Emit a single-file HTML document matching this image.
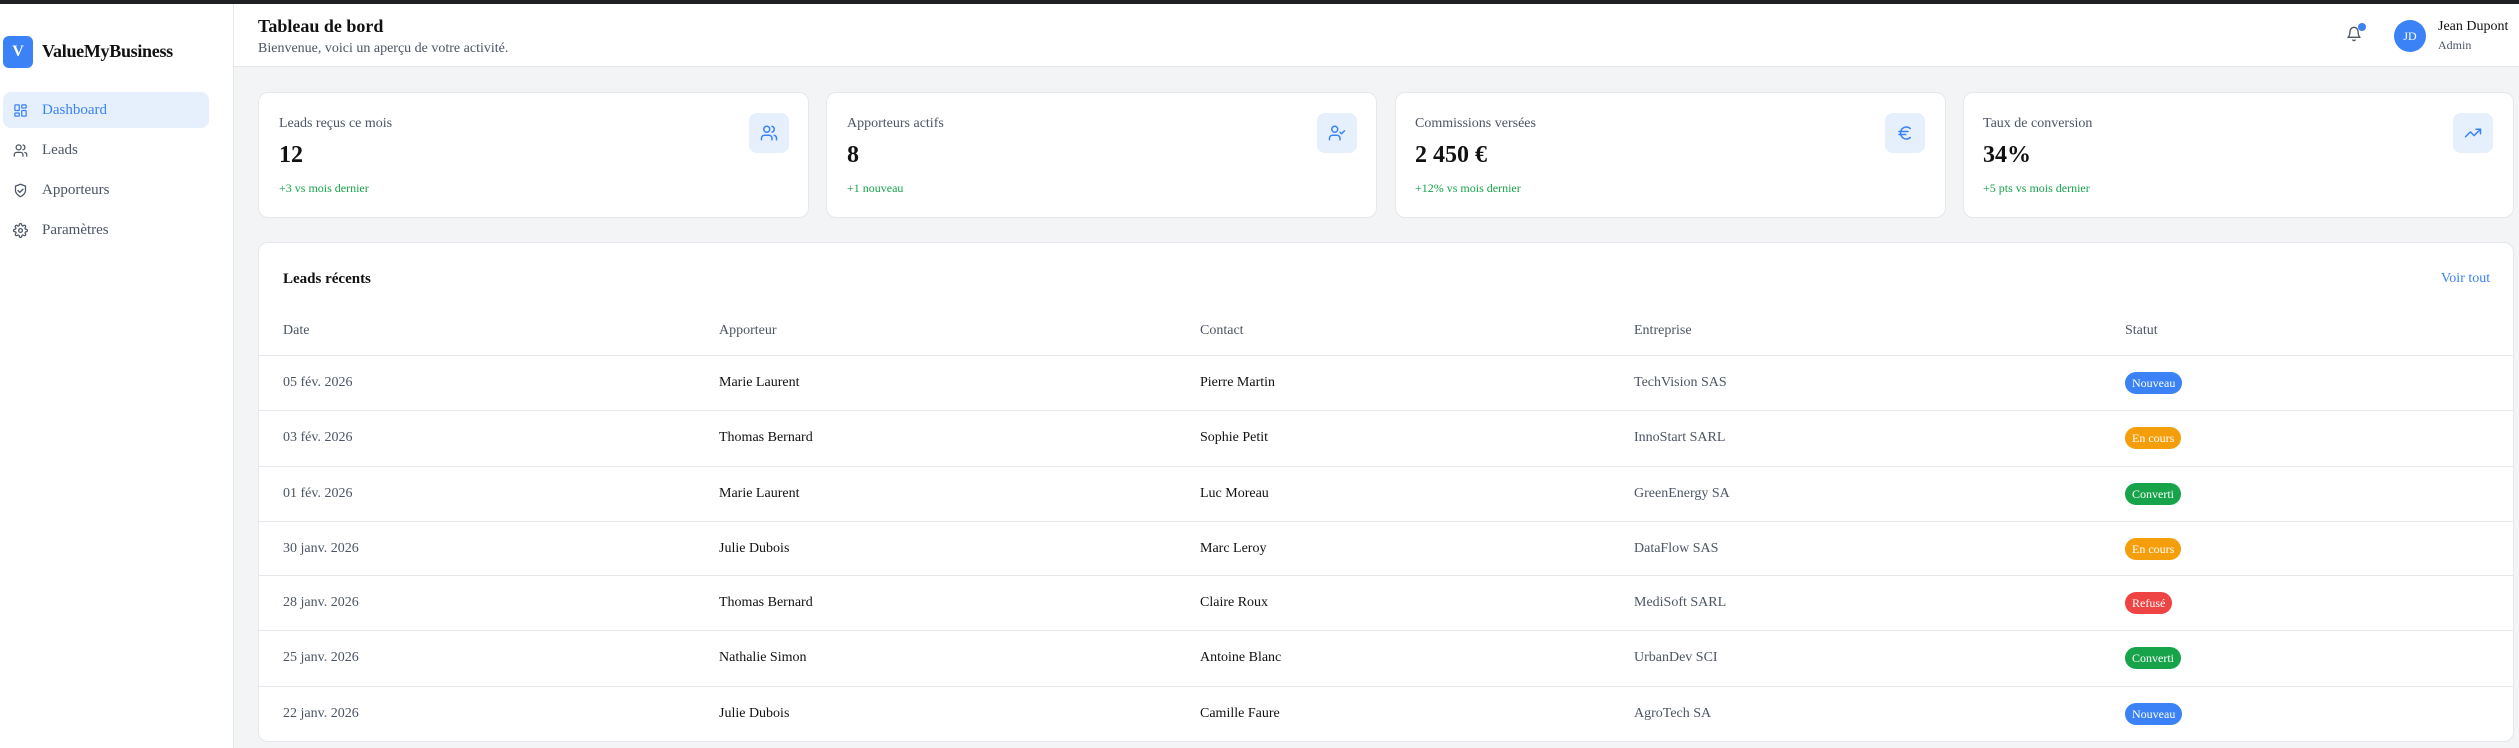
<!DOCTYPE html>
<html><head><meta charset="utf-8"><style>
*{box-sizing:border-box;margin:0;padding:0}
body{width:2519px;height:748px;overflow:hidden;background:#f3f4f6;font-family:"Liberation Serif",serif;position:relative;color:#111}
.abs{position:absolute}
.topbar{left:0;top:0;width:2519px;height:4px;background:#1f2023}
.side{left:0;top:4px;width:234px;height:744px;background:#fff;border-right:1px solid #e5e7eb}
.hdr{left:234px;top:4px;width:2285px;height:63px;background:#fff;border-bottom:1px solid #e5e7eb}
.logo{left:3px;top:36px;width:30px;height:32px;background:#3b82f6;border-radius:6px;color:#fff;font-weight:bold;font-size:16px;display:flex;align-items:center;justify-content:center}
.brand{left:42px;top:41px;font-weight:bold;font-size:18px;letter-spacing:-0.3px}
.nav{left:3px;width:206px;height:36px;border-radius:8px;display:flex;align-items:center;padding-left:10px;font-size:15px;color:#4b5563}
.nav svg{width:15px;height:15px;margin-right:14px;stroke:currentColor;fill:none;stroke-width:2;stroke-linecap:round;stroke-linejoin:round}
.nav.act{background:#e6f0fd;color:#3b82f6}
.card{background:#fff;border:1px solid #e5e7eb;border-radius:10px}
.lbl{font-size:14px;color:#4b5563}
.val{font-size:24px;font-weight:bold}
.grn{font-size:12px;color:#16a34a}
.ib{width:40px;height:40px;background:#e6f0fd;border-radius:8px;display:flex;align-items:center;justify-content:center;color:#3b82f6}
.ib svg{width:18px;height:18px;stroke:currentColor;fill:none;stroke-width:2;stroke-linecap:round;stroke-linejoin:round}
.row{left:259px;width:2254px;border-top:1px solid #e5e7eb;height:55px;font-size:14px}
.row span{position:absolute;top:50%;transform:translateY(-50%);white-space:nowrap}
.g{color:#4b5563}
.b{color:#fff;font-size:12px;border-radius:11px;height:22px;padding:0 7px;line-height:22px}
</style></head><body>
<div class="abs topbar"></div>
<div class="abs side"></div>
<div class="abs hdr"></div>
<div class="abs logo">V</div>
<div class="abs brand">ValueMyBusiness</div>
<div class="abs nav act" style="top:92px"><svg viewBox="0 0 24 24"><rect x="3" y="3" width="7" height="9" rx="1"/><rect x="14" y="3" width="7" height="5" rx="1"/><rect x="14" y="12" width="7" height="9" rx="1"/><rect x="3" y="16" width="7" height="5" rx="1"/></svg>Dashboard</div>
<div class="abs nav" style="top:132px"><svg viewBox="0 0 24 24"><path d="M16 21v-2a4 4 0 0 0-4-4H6a4 4 0 0 0-4 4v2"/><circle cx="9" cy="7" r="4"/><path d="M22 21v-2a4 4 0 0 0-3-3.87"/><path d="M16 3.13a4 4 0 0 1 0 7.75"/></svg>Leads</div>
<div class="abs nav" style="top:172px"><svg viewBox="0 0 24 24"><path d="M12 22s8-4 8-10V5l-8-3-8 3v7c0 6 8 10 8 10z"/><path d="M8 12l3 3 5-5"/></svg>Apporteurs</div>
<div class="abs nav" style="top:212px"><svg viewBox="0 0 24 24"><circle cx="12" cy="12" r="3"/><path d="M19.4 15a1.65 1.65 0 0 0 .33 1.82l.06.06a2 2 0 1 1-2.830 2.83l-.06-.06a1.65 1.65 0 0 0-2.82 1.17V21a2 2 0 1 1-4 0v-.09A1.650 1.65 0 0 0 9 19.4a1.65 1.65 0 0 0-1.82.33l-.06.06a2 2 0 1 1-2.83-2.83l.06-.06A1.65 1.65 0 0 0 3.2 14H3a2 2 0 1 1 0-4h.09A1.65 1.65 0 0 0 4.6 9a1.65 1.65 0 0 0-.33-1.82l-.06-.06a2 2 0 1 1 2.83-2.830l.06.06A1.65 1.65 0 0 0 10 3.09V3a2 2 0 1 1 4 0v.09a1.65 1.65 0 0 0 1 1.51 1.65 1.65 0 0 0 1.82-.33l.06-.06a2 2 0 1 1 2.83 2.83l-.06.06A1.65 1.65 0 0 0 20.91 10H21a2 2 0 1 1 0 4h-.09a1.65 1.65 0 0 0-1.51 1z"/></svg>Paramètres</div>

<div class="abs" style="left:258px;top:16px;font-size:18px;font-weight:bold">Tableau de bord</div>
<div class="abs" style="left:258px;top:41px;font-size:14px;color:#4b5563">Bienvenue, voici un aperçu de votre activité.</div>

<svg class="abs" style="left:2346px;top:26px" width="16" height="16" viewBox="0 0 24 24" fill="none" stroke="#4b5563" stroke-width="2" stroke-linecap="round" stroke-linejoin="round"><path d="M18 8A6 6 0 0 0 6 8c0 7-3 9-3 9h18s-3-2-3-9"/><path d="M13.7 21a2 2 0 0 1-3.4 0"/></svg>
<div class="abs" style="left:2358px;top:23px;width:8px;height:8px;border-radius:50%;background:#3b82f6"></div>
<div class="abs" style="left:2394px;top:20px;width:32px;height:32px;border-radius:50%;background:#3b82f6;color:#fff;font-size:12px;display:flex;align-items:center;justify-content:center">JD</div>
<div class="abs" style="left:2438px;top:19px;font-size:14px">Jean Dupont</div>
<div class="abs" style="left:2438px;top:38px;font-size:12px;color:#4b5563">Admin</div>

<div class="abs card" style="left:258px;top:92px;width:551px;height:126px"></div>
<div class="abs card" style="left:826px;top:92px;width:551px;height:126px"></div>
<div class="abs card" style="left:1395px;top:92px;width:551px;height:126px"></div>
<div class="abs card" style="left:1963px;top:92px;width:551px;height:126px"></div>

<div class="abs lbl" style="left:279px;top:116px">Leads reçus ce mois</div>
<div class="abs val" style="left:279px;top:142px">12</div>
<div class="abs grn" style="left:279px;top:181px">+3 vs mois dernier</div>
<div class="abs ib" style="left:749px;top:113px"><svg viewBox="0 0 24 24"><path d="M16 21v-2a4 4 0 0 0-4-4H6a4 4 0 0 0-4 4v2"/><circle cx="9" cy="7" r="4"/><path d="M22 21v-2a4 4 0 0 0-3-3.87"/><path d="M16 3.13a4 4 0 0 1 0 7.75"/></svg></div>

<div class="abs lbl" style="left:847px;top:116px">Apporteurs actifs</div>
<div class="abs val" style="left:847px;top:142px">8</div>
<div class="abs grn" style="left:847px;top:181px">+1 nouveau</div>
<div class="abs ib" style="left:1317px;top:113px"><svg viewBox="0 0 24 24"><path d="M16 21v-2a4 4 0 0 0-4-4H6a4 4 0 0 0-4 4v2"/><circle cx="9" cy="7" r="4"/><path d="M16 11l2 2 4-4"/></svg></div>

<div class="abs lbl" style="left:1415px;top:116px">Commissions versées</div>
<div class="abs val" style="left:1415px;top:142px">2 450 €</div>
<div class="abs grn" style="left:1415px;top:181px">+12% vs mois dernier</div>
<div class="abs ib" style="left:1885px;top:113px"><svg viewBox="0 0 24 24"><path d="M4 10h12"/><path d="M4 14h9"/><path d="M19 6a7.7 7.7 0 0 0-5.2-2A7.9 7.9 0 0 0 6 12c0 4.4 3.5 8 7.8 8 2 0 3.8-.8 5.2-2"/></svg></div>

<div class="abs lbl" style="left:1983px;top:116px">Taux de conversion</div>
<div class="abs val" style="left:1983px;top:142px">34%</div>
<div class="abs grn" style="left:1983px;top:181px">+5 pts vs mois dernier</div>
<div class="abs ib" style="left:2453px;top:113px"><svg viewBox="0 0 24 24"><polyline points="22 7 13.5 15.5 8.5 10.5 2 17"/><polyline points="16 7 22 7 22 13"/></svg></div>

<div class="abs card" style="left:258px;top:242px;width:2256px;height:500px"></div>
<div class="abs" style="left:283px;top:271px;font-size:15px;font-weight:bold">Leads récents</div>
<div class="abs" style="left:2441px;top:271px;font-size:14px;color:#3b82f6">Voir tout</div>
<div class="abs g" style="left:283px;top:323px;font-size:14px">Date</div>
<div class="abs g" style="left:719px;top:323px;font-size:14px">Apporteur</div>
<div class="abs g" style="left:1200px;top:323px;font-size:14px">Contact</div>
<div class="abs g" style="left:1634px;top:323px;font-size:14px">Entreprise</div>
<div class="abs g" style="left:2125px;top:323px;font-size:14px">Statut</div>

<div class="abs row" style="top:355px"><span class="g" style="left:24px">05 fév. 2026</span><span style="left:460px">Marie Laurent</span><span style="left:941px">Pierre Martin</span><span class="g" style="left:1375px">TechVision SAS</span><span class="b" style="left:1866px;background:#3b82f6">Nouveau</span></div>
<div class="abs row" style="top:410px"><span class="g" style="left:24px">03 fév. 2026</span><span style="left:460px">Thomas Bernard</span><span style="left:941px">Sophie Petit</span><span class="g" style="left:1375px">InnoStart SARL</span><span class="b" style="left:1866px;background:#f59e0b">En cours</span></div>
<div class="abs row" style="top:466px"><span class="g" style="left:24px">01 fév. 2026</span><span style="left:460px">Marie Laurent</span><span style="left:941px">Luc Moreau</span><span class="g" style="left:1375px">GreenEnergy SA</span><span class="b" style="left:1866px;background:#16a34a">Converti</span></div>
<div class="abs row" style="top:521px"><span class="g" style="left:24px">30 janv. 2026</span><span style="left:460px">Julie Dubois</span><span style="left:941px">Marc Leroy</span><span class="g" style="left:1375px">DataFlow SAS</span><span class="b" style="left:1866px;background:#f59e0b">En cours</span></div>
<div class="abs row" style="top:575px"><span class="g" style="left:24px">28 janv. 2026</span><span style="left:460px">Thomas Bernard</span><span style="left:941px">Claire Roux</span><span class="g" style="left:1375px">MediSoft SARL</span><span class="b" style="left:1866px;background:#ef4444">Refusé</span></div>
<div class="abs row" style="top:630px"><span class="g" style="left:24px">25 janv. 2026</span><span style="left:460px">Nathalie Simon</span><span style="left:941px">Antoine Blanc</span><span class="g" style="left:1375px">UrbanDev SCI</span><span class="b" style="left:1866px;background:#16a34a">Converti</span></div>
<div class="abs row" style="top:686px"><span class="g" style="left:24px">22 janv. 2026</span><span style="left:460px">Julie Dubois</span><span style="left:941px">Camille Faure</span><span class="g" style="left:1375px">AgroTech SA</span><span class="b" style="left:1866px;background:#3b82f6">Nouveau</span></div>
</body></html>
